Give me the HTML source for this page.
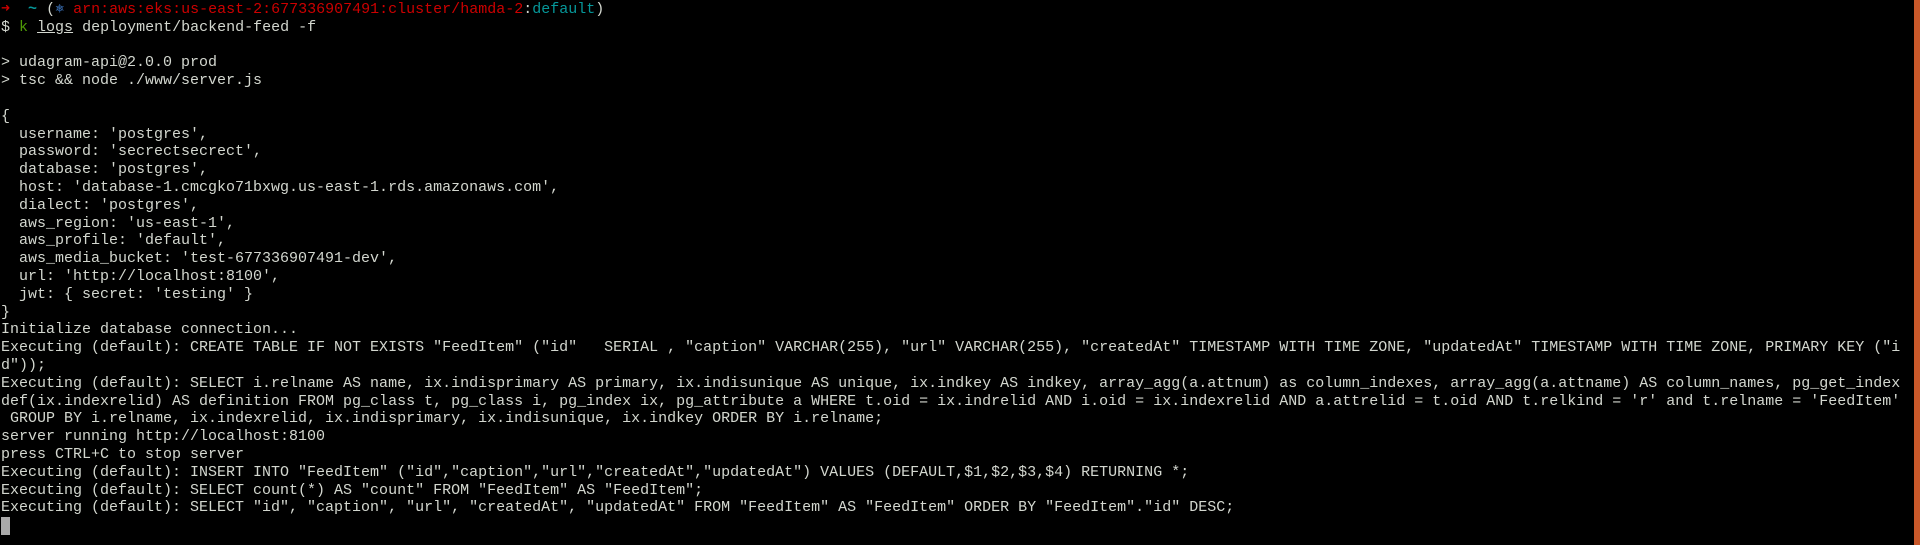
<!DOCTYPE html>
<html><head><meta charset="utf-8"><style>
html,body{margin:0;padding:0;background:#000;width:1920px;height:545px;overflow:hidden}
pre{margin:0;position:absolute;top:1px;left:1px;font-family:"Liberation Mono","DejaVu Sans Mono",monospace;font-size:15px;line-height:17.8px;color:#d3d7cf;white-space:pre}
.r{color:#cc0000}.c{color:#06989a}.g{color:#4e9a06}.b{color:#3465a4}
.cur{display:inline-block;width:9px;height:18px;background:#aaa;vertical-align:top}
.sb{position:absolute;right:0;top:0;width:6px;height:545px;background:#c8582a}
</style></head><body>
<pre><span class="r"><b>➜</b></span>  <span class="c"><b>~</b></span> (<span class="b">⎈</span> <span class="r">arn:aws:eks:us-east-2:677336907491:cluster/hamda-2</span>:<span class="c">default</span>)
$ <span class="g">k</span> <u>logs</u> deployment/backend-feed -f

&gt; udagram-api@2.0.0 prod
&gt; tsc &amp;&amp; node ./www/server.js

{
  username: 'postgres',
  password: 'secrectsecrect',
  database: 'postgres',
  host: 'database-1.cmcgko71bxwg.us-east-1.rds.amazonaws.com',
  dialect: 'postgres',
  aws_region: 'us-east-1',
  aws_profile: 'default',
  aws_media_bucket: 'test-677336907491-dev',
  url: 'http://localhost:8100',
  jwt: { secret: 'testing' }
}
Initialize database connection...
Executing (default): CREATE TABLE IF NOT EXISTS "FeedItem" ("id"   SERIAL , "caption" VARCHAR(255), "url" VARCHAR(255), "createdAt" TIMESTAMP WITH TIME ZONE, "updatedAt" TIMESTAMP WITH TIME ZONE, PRIMARY KEY ("i
d"));
Executing (default): SELECT i.relname AS name, ix.indisprimary AS primary, ix.indisunique AS unique, ix.indkey AS indkey, array_agg(a.attnum) as column_indexes, array_agg(a.attname) AS column_names, pg_get_index
def(ix.indexrelid) AS definition FROM pg_class t, pg_class i, pg_index ix, pg_attribute a WHERE t.oid = ix.indrelid AND i.oid = ix.indexrelid AND a.attrelid = t.oid AND t.relkind = 'r' and t.relname = 'FeedItem'
 GROUP BY i.relname, ix.indexrelid, ix.indisprimary, ix.indisunique, ix.indkey ORDER BY i.relname;
server running http://localhost:8100
press CTRL+C to stop server
Executing (default): INSERT INTO "FeedItem" ("id","caption","url","createdAt","updatedAt") VALUES (DEFAULT,$1,$2,$3,$4) RETURNING *;
Executing (default): SELECT count(*) AS "count" FROM "FeedItem" AS "FeedItem";
Executing (default): SELECT "id", "caption", "url", "createdAt", "updatedAt" FROM "FeedItem" AS "FeedItem" ORDER BY "FeedItem"."id" DESC;
<span class="cur"></span></pre>
<div class="sb"></div>
</body></html>
